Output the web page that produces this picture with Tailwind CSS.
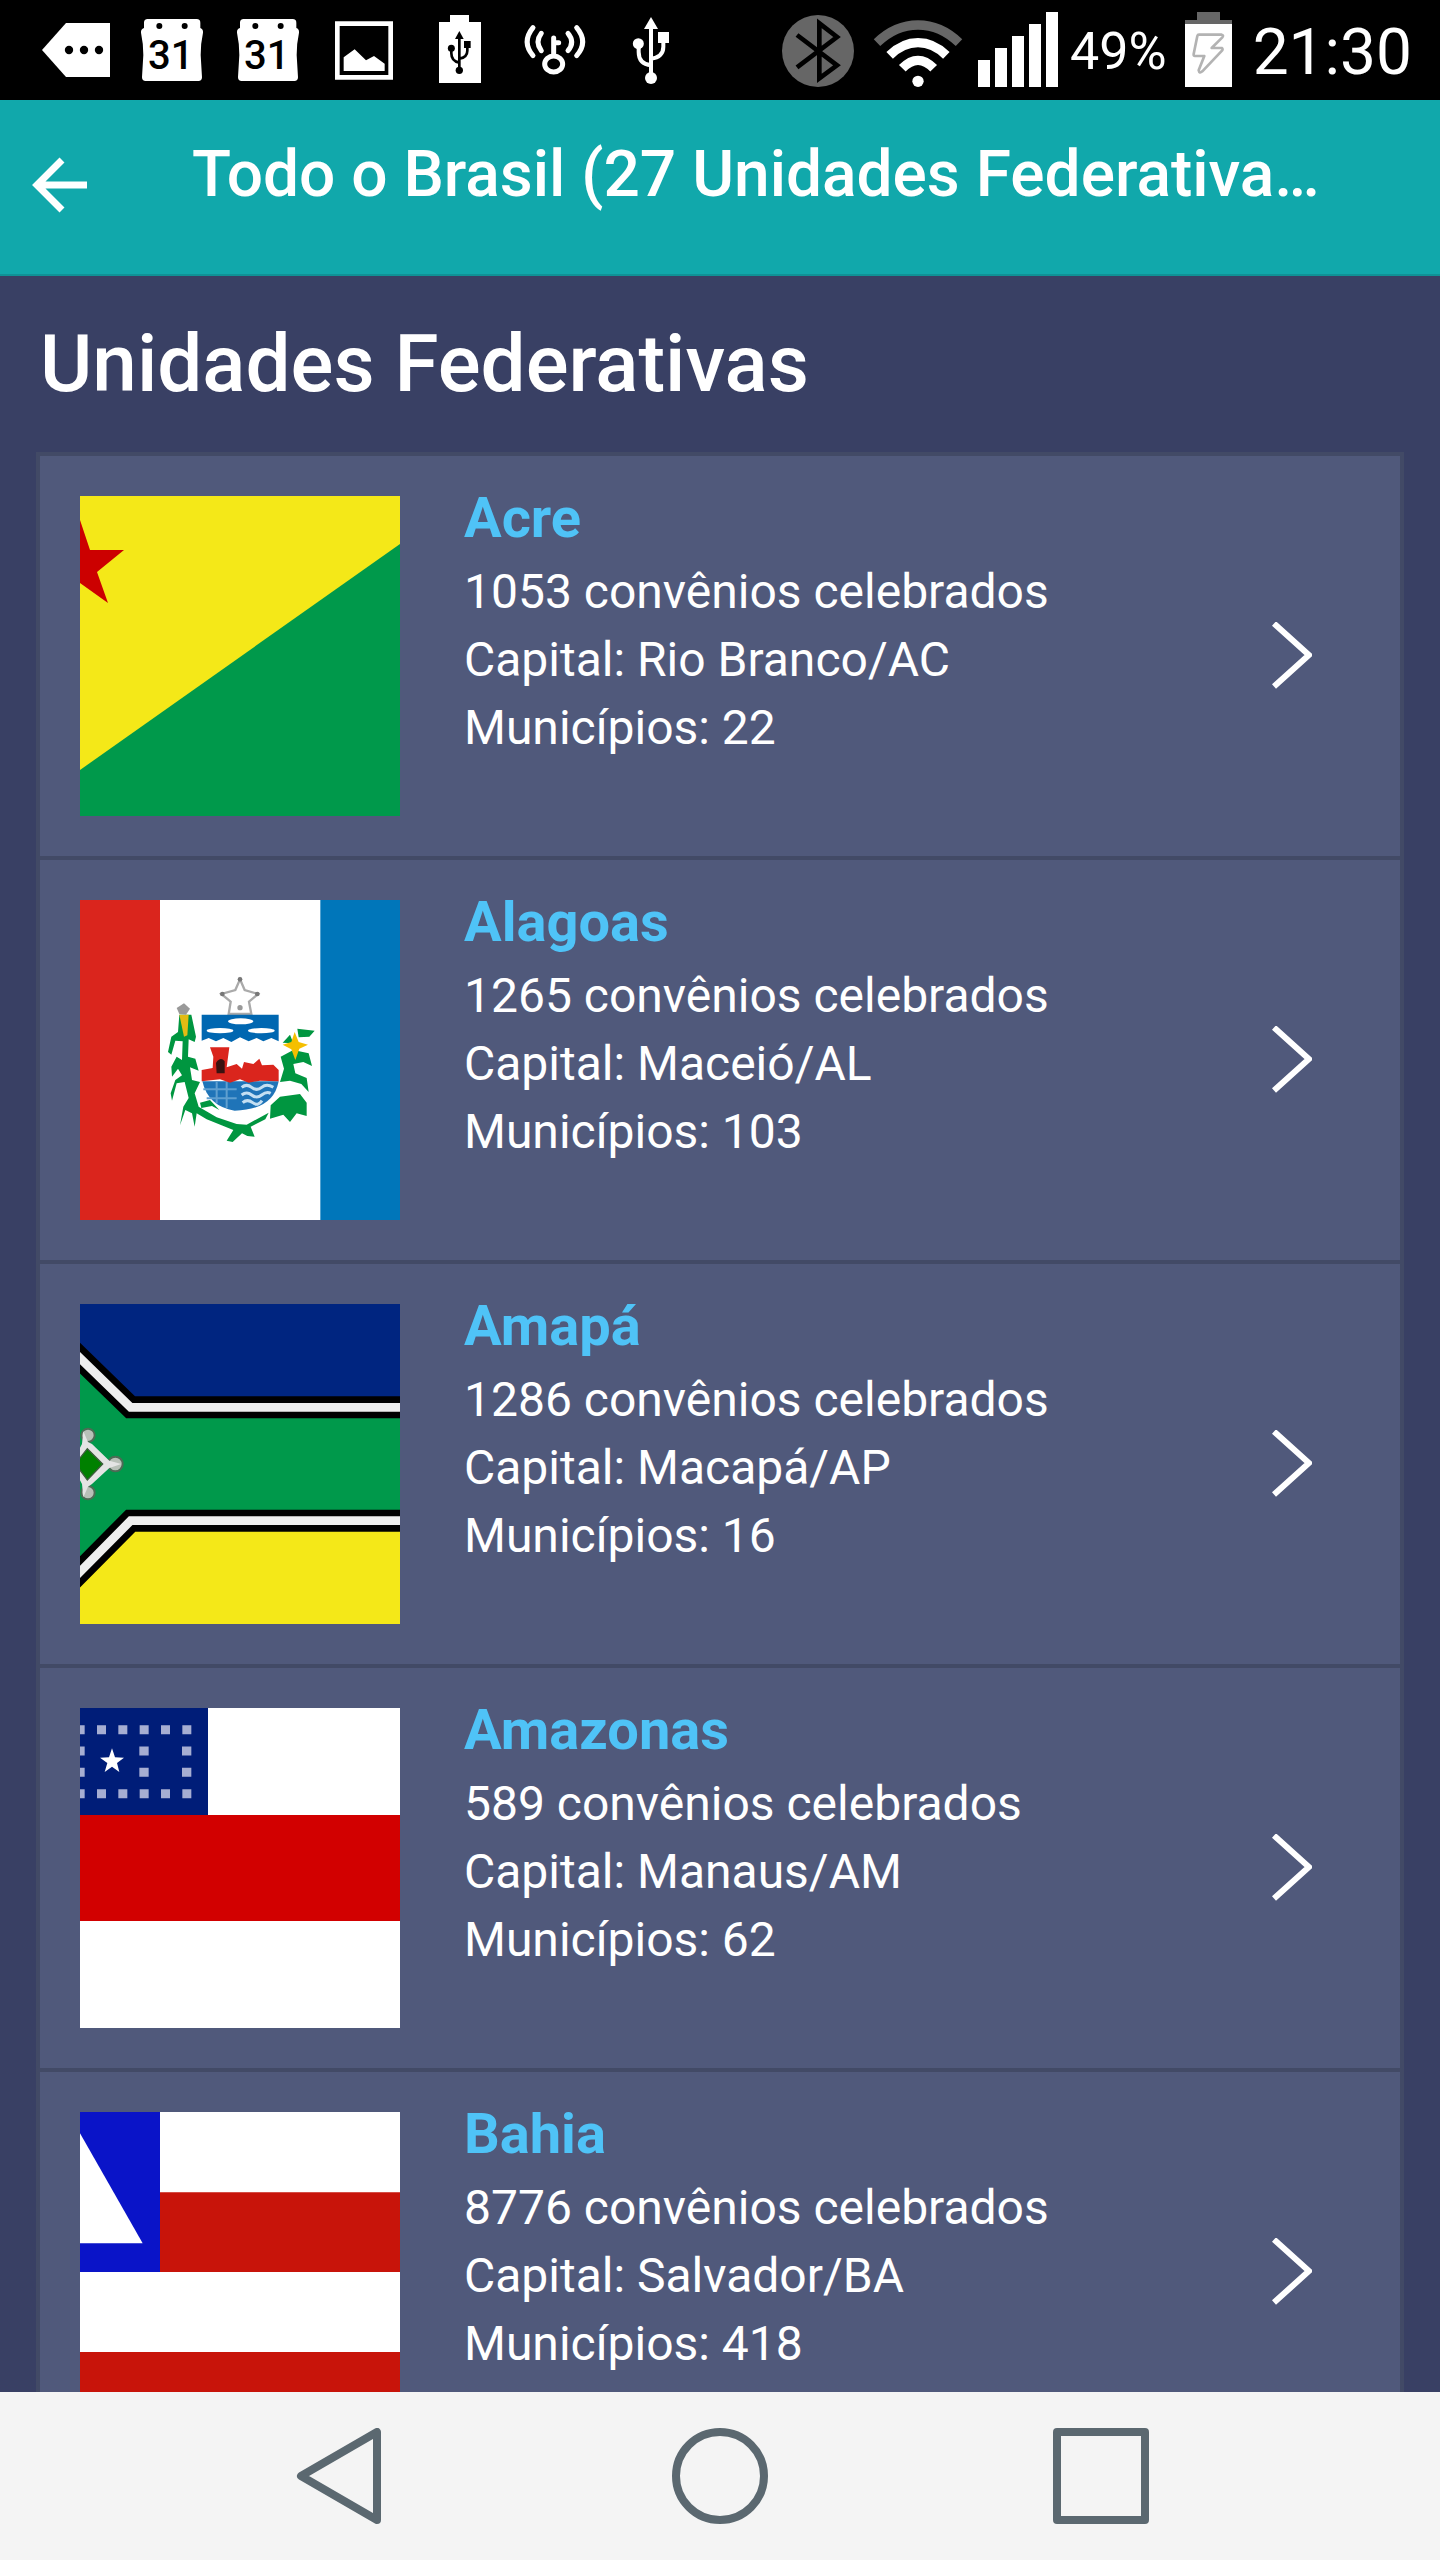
<!DOCTYPE html>
<html lang="pt-BR">
<head>
<meta charset="utf-8">
<meta name="viewport" content="width=device-width, initial-scale=1">
<title>Unidades Federativas</title>
<script src="https://cdn.jsdelivr.net/npm/@tailwindcss/browser@4"></script>
</head>
<body class="flex h-screen flex-col overflow-hidden bg-[#394064] font-['Roboto',sans-serif] text-white">

<!-- Shared symbols -->
<svg class="hidden" aria-hidden="true">
  <symbol id="chevron" viewBox="0 0 40 68"><path d="M2 1.500L37 33L2 64.500" fill="none" stroke="#fff" stroke-width="6"/></symbol>
  <symbol id="calendar" viewBox="372 0 288 300">
    <path d="M432 68Q432 57 443 57H590Q601 57 601 68V84Q610 87 609 98Q602 130 602 165L606 232Q606 243 595 243H437Q426 243 426 232L430 165Q430 130 423 98Q422 87 432 84Z" fill="#fff"/>
    <circle cx="478" cy="78" r="9"/><circle cx="554" cy="78" r="9"/>
    <text x="512" y="207" text-anchor="middle" font-family="Roboto, sans-serif" font-size="120" font-weight="500">31</text>
  </symbol>
</svg>

<!-- Status bar -->
<div class="flex h-[100px] shrink-0 items-center justify-between bg-black pr-7 pl-7">
  <div class="flex">
    <svg class="h-[100px] w-24" viewBox="84 0 288 300"><path d="M126 150L198 69H330V231H198Z" fill="#fff"/><circle cx="207" cy="150" r="12.500"/><circle cx="252" cy="150" r="12.500"/><circle cx="297" cy="150" r="12.500"/></svg>
    <svg class="h-[100px] w-24"><use href="#calendar"/></svg>
    <svg class="h-[100px] w-24"><use href="#calendar"/></svg>
    <svg class="h-[100px] w-24" viewBox="948 0 288 300"><path d="M1012 71H1172V232H1012Z" fill="none" stroke="#fff" stroke-width="14"/><path d="M1031 213V172L1064 148L1098 181L1122 168L1154 191V213Z" fill="#fff"/></svg>
    <svg class="h-[100px] w-24" viewBox="1236 0 288 300">
      <path d="M1350 45H1407V66H1443V249H1317V66H1350Z" fill="#fff"/>
      <path d="M1378 210V110M1354 148V160Q1354 184 1378 188M1402 138V152Q1402 172 1378 176" fill="none" stroke="#000" stroke-width="8"/>
      <path d="M1378 93L1391 117H1365Z"/><circle cx="1354" cy="145" r="10.500"/><circle cx="1378" cy="211" r="11"/><path d="M1392 123H1412V144H1392Z"/>
    </svg>
    <svg class="h-[100px] w-24" viewBox="84 0 288 300" fill="none" stroke="#fff" stroke-width="15" stroke-linecap="round">
      <ellipse cx="221" cy="192" rx="27" ry="24"/><path d="M221 165V114M225 128H236M184 100Q164 126 184 152M159 83Q124 126 159 167M264 100Q286 126 264 152M290 83Q326 126 290 167"/>
    </svg>
    <svg class="h-[100px] w-24" viewBox="372 0 288 300">
      <path d="M513 230V80M476 135V156Q476 192 513 196M550 120V140Q550 171 513 176" fill="none" stroke="#fff" stroke-width="12"/>
      <path d="M513 51L534 87H492Z" fill="#fff"/><circle cx="475" cy="131" r="16.500" fill="#fff"/><circle cx="513" cy="234" r="18" fill="#fff"/><path d="M534 96H567V129H534Z" fill="#fff"/>
    </svg>
  </div>
  <div class="flex items-center gap-3">
    <svg class="h-[100px] w-20" viewBox="894 0 240 300"><circle cx="1014" cy="153" r="108" fill="#666"/><path d="M951 105L1071 196L1018 235V70L1071 111L951 202" fill="none" stroke="#000" stroke-width="14" stroke-miterlimit="10"/></svg>
    <svg class="h-[100px] w-24" viewBox="1170 0 288 300" fill="none" stroke-width="28"><path d="M1191 128Q1246 75 1314 75Q1382 75 1437 128" stroke="#666"/><path d="M1229 166Q1268 128 1314 128Q1360 128 1399 166M1267 205Q1290 181 1314 181Q1338 181 1361 205" stroke="#fff"/><circle cx="1314" cy="244" r="17" fill="#fff"/></svg>
    <svg class="h-[100px] w-20" viewBox="54 0 240 300" fill="#fff"><path d="M54 180H90V261H54ZM105 144H141V261H105ZM156 108H192V261H156ZM207 72H243V261H207ZM258 36H294V261H258Z"/></svg>
    <span class="pt-1 text-[52px]">49%</span>
    <svg class="mr-2 ml-1.5 h-[100px] w-12" viewBox="675 0 144 300"><path d="M711 36H780V60H816V72H675V60H711Z" fill="#666"/><path d="M675 72H816V261H675Z" fill="#fff"/><path d="M717 104H785Q792 106 787 112L755 144H785Q790 147 786 152L727 214Q718 222 716 211L733 168H705Q700 168 701 162L712 108Q713 104 717 104Z" fill="none" stroke="#b3b3b3" stroke-width="8" stroke-linejoin="round"/></svg>
    <span class="pt-1.5 text-[64px]">21:30</span>
  </div>
</div>

<!-- App bar -->
<header class="flex h-[176px] shrink-0 items-start border-b-2 border-[#0f9296] bg-[#11a8ab] pr-28">
  <button type="button" aria-label="Voltar" class="flex h-full w-48 shrink-0 items-center pb-1 pl-8">
    <svg class="size-14" viewBox="0 0 56 56" fill="none" stroke="#fff" stroke-width="7"><path d="M55 28H6M30 3L5 28L30 53"/></svg>
  </button>
  <h1 class="min-w-0 flex-1 truncate pt-9 text-[64px] leading-[78px] font-medium">Todo o Brasil (27 Unidades Federativas)</h1>
</header>

<!-- State list -->
<main class="min-h-0 flex-1 overflow-y-auto px-9 [scrollbar-width:none]">
  <h2 class="py-10 pl-1 text-[80px] leading-[96px] font-medium">Unidades Federativas</h2>
  <ul class="divide-y-4 divide-[#424a66] border-4 border-[#424a66] bg-[#50597b]">
    <li>
      <a href="#acre" class="flex gap-16 p-10">
        <svg class="size-80 shrink-0" viewBox="0 0 320 320"><path d="M0 0H320V320H0Z" fill="#f4e818"/><path d="M0 274L320 48V320H0Z" fill="#00994b"/><path d="M0 24L10 54H44L17 76L28 107L0 87Z" fill="#cc0000"/></svg>
        <div class="min-w-0 flex-1 text-5xl">
          <h3 class="mb-[18px] text-[56px] leading-[44px] font-bold text-[#4fc3f7]">Acre</h3>
          <p class="leading-[68px]">1053 convênios celebrados</p>
          <p class="leading-[68px]">Capital: Rio Branco/AC</p>
          <p class="leading-[68px]">Municípios: 22</p>
        </div>
        <svg class="mr-12 h-[68px] w-10 shrink-0 self-center"><use href="#chevron"/></svg>
      </a>
    </li>
    <li>
      <a href="#alagoas" class="flex gap-16 p-10">
        <svg class="size-80 shrink-0" viewBox="60 60 960 960">
          <path d="M60 60H1020V1020H60Z" fill="#fff"/><path d="M60 60H300V1020H60Z" fill="#da251d"/><path d="M781 60H1020V1020H781Z" fill="#0076ba"/>
          <path d="M540 298L554 330L594 342L567 365L574 402H506L512 365L484 342L526 330Z" fill="#fff" stroke="#aaa" stroke-width="7"/>
          <circle cx="540" cy="298" r="7" fill="#777"/><circle cx="487" cy="342" r="7" fill="#777"/><circle cx="592" cy="342" r="7" fill="#777"/><circle cx="540" cy="383" r="8" fill="#999"/>
          <path d="M425 404H656V484L634 474L610 484L590 474L566 484L540 472L514 486L490 474L468 484L446 474L425 482Z" fill="#0067b1"/>
          <g fill="#fff"><ellipse cx="542" cy="424" rx="38" ry="9"/><ellipse cx="480" cy="452" rx="40" ry="8"/><ellipse cx="604" cy="452" rx="40" ry="8"/></g>
          <path d="M427 604H656Q640 690 524 692Q445 680 427 604Z" fill="#1f74b8"/>
          <path d="M545 622Q560 610 575 622T605 622T640 622M545 645Q560 633 575 645T605 645T632 640M548 668Q562 656 578 668T606 662" fill="none" stroke="#c4dff2" stroke-width="9"/>
          <path d="M470 606V670M500 606V684M430 628H530M440 655H530" fill="none" stroke="#5f9fd0" stroke-width="6"/>
          <path d="M425 570L458 564L460 530L450 502H508L500 562L530 552L546 566L552 546L580 552L598 536L606 556L640 554L656 570V604L600 602L566 608L540 598L510 608L480 598L425 604Z" fill="#da251d"/>
          <path d="M468 548Q482 528 494 544V580H470Z" fill="#3a1210"/>
          <g fill="#009640">
            <path d="M358 404H394L408 470L404 486L386 478L384 530L406 536L416 572L390 562L396 600L420 606L404 640L416 680L470 712L530 732L560 734L626 698L616 718L572 740L584 770L562 768L546 760L518 786L500 782L520 750L440 718L410 700L404 740L396 700L376 690L360 736L370 680L386 654L374 606L350 610L336 662L332 640L346 600L366 586L354 566L336 590L334 560L350 530L366 540L368 484L346 482L334 524L324 516L334 470L354 456Z"/>
            <path d="M420 668L450 660L478 690L456 678L424 684Z"/>
            <path d="M712 446L764 452L748 470L716 472ZM668 488L690 464L700 490ZM662 530L700 510L746 520L756 558L730 546L700 552L706 580L740 594L746 636L724 612L690 602L660 606L672 566Z"/>
            <path d="M632 676L660 650L720 642L740 668V708L710 700L690 726L670 704L630 716Z"/>
          </g>
          <path d="M358 404H386L382 466L372 470Z" fill="#e3bb13"/><path d="M350 384L372 370L390 386L378 404L358 402Z" fill="#999"/>
          <path d="M704 456L716 486L744 494L718 506L706 540L694 508L668 494L694 486Z" fill="#f5bf00"/>
        </svg>
        <div class="min-w-0 flex-1 text-5xl">
          <h3 class="mb-[18px] text-[56px] leading-[44px] font-bold text-[#4fc3f7]">Alagoas</h3>
          <p class="leading-[68px]">1265 convênios celebrados</p>
          <p class="leading-[68px]">Capital: Maceió/AL</p>
          <p class="leading-[68px]">Municípios: 103</p>
        </div>
        <svg class="mr-12 h-[68px] w-10 shrink-0 self-center"><use href="#chevron"/></svg>
      </a>
    </li>
    <li>
      <a href="#amapa" class="flex gap-16 p-10">
        <svg class="size-80 shrink-0" viewBox="60 42 960 960">
          <path d="M60 42H1020V522H60Z" fill="#002580"/><path d="M60 522H1020V1002H60Z" fill="#f4e818"/>
          <path d="M20 155L212 352H1040V692H212L20 890Z" fill="#00994b"/>
          <g fill="none" stroke="#000" stroke-width="66"><path d="M0 146L212 352H1060"/><path d="M0 906L212 692H1060"/></g>
          <g fill="none" stroke="#eee" stroke-width="26"><path d="M0 146L212 352H1060"/><path d="M0 906L212 692H1060"/></g>
          <g fill="#b8c0b8" stroke="#4c6b55" stroke-width="6"><circle cx="84" cy="436" r="20"/><circle cx="84" cy="608" r="20"/><circle cx="166" cy="522" r="22"/></g>
          <path d="M40 512L66 462L70 424L84 456L96 462L148 512L184 522L148 534L96 582L84 590L70 622L66 582L40 532Z" fill="#e4e4e4"/>
          <path d="M46 522L82 476L128 522L82 570Z" fill="#008000" stroke="#3d5c3d" stroke-width="4"/>
        </svg>
        <div class="min-w-0 flex-1 text-5xl">
          <h3 class="mb-[18px] text-[56px] leading-[44px] font-bold text-[#4fc3f7]">Amapá</h3>
          <p class="leading-[68px]">1286 convênios celebrados</p>
          <p class="leading-[68px]">Capital: Macapá/AP</p>
          <p class="leading-[68px]">Municípios: 16</p>
        </div>
        <svg class="mr-12 h-[68px] w-10 shrink-0 self-center"><use href="#chevron"/></svg>
      </a>
    </li>
    <li>
      <a href="#amazonas" class="flex gap-16 p-10">
        <svg class="size-80 shrink-0" viewBox="60 54 960 960">
          <path d="M60 54H1020V1014H60Z" fill="#fff"/><path d="M60 375H1020V693H60Z" fill="#d20000"/><path d="M60 54H444V375H60Z" fill="#001d78"/>
          <g fill="none" stroke="#a6aed2" stroke-width="27"><path d="M47 119H400M47 311H400" stroke-dasharray="27 37"/><path d="M47 183H74M47 247H74M238 183H266M238 247H266M366 183H394M366 247H394"/></g>
          <path d="M156 175L165 202L192 203L171 219L178 246L156 230L134 246L142 219L120 203L147 202Z" fill="#fff"/>
        </svg>
        <div class="min-w-0 flex-1 text-5xl">
          <h3 class="mb-[18px] text-[56px] leading-[44px] font-bold text-[#4fc3f7]">Amazonas</h3>
          <p class="leading-[68px]">589 convênios celebrados</p>
          <p class="leading-[68px]">Capital: Manaus/AM</p>
          <p class="leading-[68px]">Municípios: 62</p>
        </div>
        <svg class="mr-12 h-[68px] w-10 shrink-0 self-center"><use href="#chevron"/></svg>
      </a>
    </li>
    <li>
      <a href="#bahia" class="flex gap-16 p-10">
        <svg class="size-80 shrink-0" viewBox="60 96 960 960">
          <path d="M60 96H1020V1056H60Z" fill="#fff"/><path d="M300 337H1020V576H300ZM60 816H1020V1056H60Z" fill="#c8140a"/><path d="M60 96H300V576H60Z" fill="#0a14c8"/><path d="M60 160L248 490H60Z" fill="#fff"/>
        </svg>
        <div class="min-w-0 flex-1 text-5xl">
          <h3 class="mb-[18px] text-[56px] leading-[44px] font-bold text-[#4fc3f7]">Bahia</h3>
          <p class="leading-[68px]">8776 convênios celebrados</p>
          <p class="leading-[68px]">Capital: Salvador/BA</p>
          <p class="leading-[68px]">Municípios: 418</p>
        </div>
        <svg class="mr-12 h-[68px] w-10 shrink-0 self-center"><use href="#chevron"/></svg>
      </a>
    </li>
  </ul>
</main>

<!-- System navigation -->
<nav class="grid h-[168px] shrink-0 grid-cols-3 bg-[#f4f4f4] px-[149px]">
  <button type="button" aria-label="Voltar" class="flex items-center justify-center"><svg class="size-24" viewBox="0 0 96 96" fill="none" stroke="#5b6870" stroke-width="8" stroke-linejoin="round"><path d="M10 48L86 4V92Z"/></svg></button>
  <button type="button" aria-label="Início" class="flex items-center justify-center"><svg class="size-24" viewBox="0 0 96 96" fill="none" stroke="#5b6870" stroke-width="8"><circle cx="48" cy="48" r="44"/></svg></button>
  <button type="button" aria-label="Recentes" class="flex items-center justify-center"><svg class="size-24" viewBox="0 0 96 96" fill="none" stroke="#5b6870" stroke-width="8" stroke-linejoin="round"><path d="M4 4H92V92H4Z"/></svg></button>
</nav>
</body>
</html>
